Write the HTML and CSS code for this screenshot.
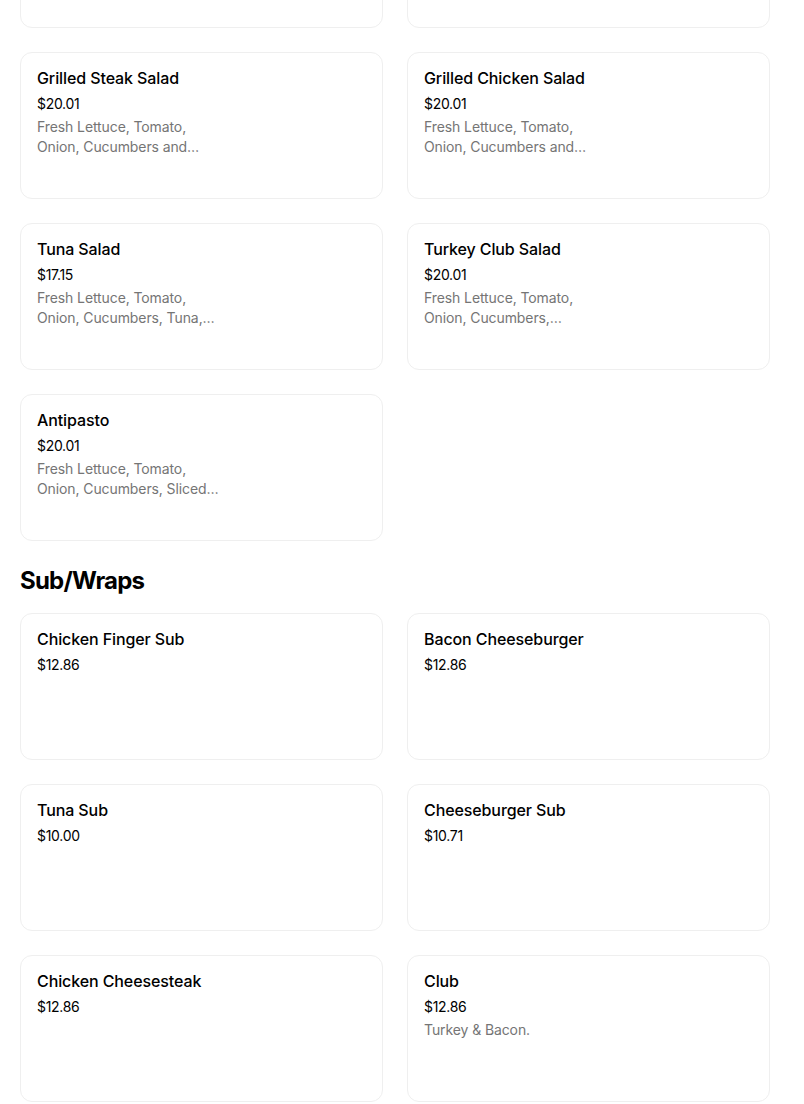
FILE: index.html
```html
<!DOCTYPE html>
<html lang="en">
<head>
    <meta charset="UTF-8">
    <meta name="viewport" content="width=device-width, initial-scale=1.0">
    <title>Menu</title>
    <link rel="stylesheet" href="styles.css">
</head>
<body>

    <div class="menu">
        <!-- Salads -->
        <section class="section">
            <div class="grid">
                <!-- row scrolled out of view -->
                <div class="card"></div>
                <div class="card"></div>

                <div class="card">
                    <h3 class="item-name">Grilled Steak Salad</h3>
                    <div class="item-price">$20.01</div>
                    <p class="item-desc">Fresh Lettuce, Tomato, Onion, Cucumbers and Grilled Steak.</p>
                </div>
                <div class="card">
                    <h3 class="item-name">Grilled Chicken Salad</h3>
                    <div class="item-price">$20.01</div>
                    <p class="item-desc">Fresh Lettuce, Tomato, Onion, Cucumbers and Grilled Chicken.</p>
                </div>

                <div class="card">
                    <h3 class="item-name">Tuna Salad</h3>
                    <div class="item-price">$17.15</div>
                    <p class="item-desc">Fresh Lettuce, Tomato, Onion, Cucumbers, Tuna, Cheese.</p>
                </div>
                <div class="card">
                    <h3 class="item-name">Turkey Club Salad</h3>
                    <div class="item-price">$20.01</div>
                    <p class="item-desc">Fresh Lettuce, Tomato, Onion, Cucumbers, Chicken, Turkey.</p>
                </div>

                <div class="card">
                    <h3 class="item-name">Antipasto</h3>
                    <div class="item-price">$20.01</div>
                    <p class="item-desc">Fresh Lettuce, Tomato, Onion, Cucumbers, Sliced Ham, Salami.</p>
                </div>
            </div>
        </section>

        <!-- Sub/Wraps -->
        <section class="section">
            <h2 class="section-title">Sub/Wraps</h2>
            <div class="grid">
                <div class="card">
                    <h3 class="item-name">Chicken Finger Sub</h3>
                    <div class="item-price">$12.86</div>
                </div>
                <div class="card">
                    <h3 class="item-name">Bacon Cheeseburger</h3>
                    <div class="item-price">$12.86</div>
                </div>

                <div class="card">
                    <h3 class="item-name">Tuna Sub</h3>
                    <div class="item-price">$10.00</div>
                </div>
                <div class="card">
                    <h3 class="item-name">Cheeseburger Sub</h3>
                    <div class="item-price">$10.71</div>
                </div>

                <div class="card">
                    <h3 class="item-name">Chicken Cheesesteak</h3>
                    <div class="item-price">$12.86</div>
                </div>
                <div class="card">
                    <h3 class="item-name">Club</h3>
                    <div class="item-price">$12.86</div>
                    <p class="item-desc">Turkey &amp; Bacon.</p>
                </div>
            </div>
        </section>
    </div>

</body>
</html>
```

FILE: styles.css
```css
body {
    margin: 0;
    background: #fff;
    color: #000;
    font-family: Inter, "Liberation Sans", Arial, sans-serif;
}

/* page is scrolled: first row sits mostly above the fold */
.menu {
    width: 750px;
    padding-left: 20px;
    margin-top: -119px;
}

.section-title {
    font-size: 24px;
    line-height: 32px;
    font-weight: 700;
    letter-spacing: -0.8px;
    margin: 24px 0 16px;
}

.grid {
    display: grid;
    grid-template-columns: 1fr 1fr;
    gap: 24px;
}

.card {
    box-sizing: border-box;
    height: 147px;
    padding: 14px 16px;
    border: 1px solid #efefef;
    border-radius: 12px;
}

.item-name {
    font-size: 16px;
    line-height: 22px;
    font-weight: 500;
    letter-spacing: -0.1px;
    margin: 0 0 5px;
}

.item-price {
    font-size: 14px;
    line-height: 20px;
    letter-spacing: -0.3px;
}

.item-desc {
    width: 186px;
    margin: 3px 0 0;
    font-size: 14px;
    line-height: 20px;
    letter-spacing: -0.1px;
    color: #757575;
    display: -webkit-box;
    -webkit-line-clamp: 2;
    -webkit-box-orient: vertical;
    overflow: hidden;
}
```
